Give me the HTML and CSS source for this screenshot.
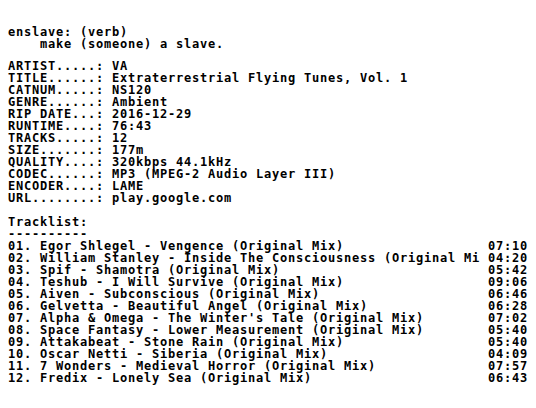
FILE: index.html
```
<!DOCTYPE html>
<html>
<head>
<meta charset="utf-8">
<link rel="stylesheet" href="styles.css">
</head>
<body class="page">
<pre class="nfo definition">enslave: (verb)
    make (someone) a slave.</pre>
<pre class="nfo info">ARTIST.....: VA
TITLE......: Extraterrestrial Flying Tunes, Vol. 1
CATNUM.....: NS120
GENRE......: Ambient
RIP DATE...: 2016-12-29
RUNTIME....: 76:43
TRACKS.....: 12
SIZE.......: 177m
QUALITY....: 320kbps 44.1kHz
CODEC......: MP3 (MPEG-2 Audio Layer III)
ENCODER....: LAME
URL........: play.google.com

Tracklist:
----------
01. Egor Shlegel - Vengence (Original Mix)                  07:10
02. William Stanley - Inside The Consciousness (Original Mi 04:20
03. Spif - Shamotra (Original Mix)                          05:42
04. Teshub - I Will Survive (Original Mix)                  09:06
05. Aiven - Subconscious (Original Mix)                     06:46
06. Gelvetta - Beautiful Angel (Original Mix)               06:28
07. Alpha &amp; Omega - The Winter's Tale (Original Mix)        07:02
08. Space Fantasy - Lower Measurement (Original Mix)        05:40
09. Attakabeat - Stone Rain (Original Mix)                  05:40
10. Oscar Netti - Siberia (Original Mix)                    04:09
11. 7 Wonders - Medieval Horror (Original Mix)              07:57
12. Fredix - Lonely Sea (Original Mix)                      06:43</pre>
</body>
</html>
```

FILE: styles.css
```
html, body {
  margin: 0;
  padding: 0;
  background: #ffffff;
}

.page {
  width: 536px;
  height: 408px;
  overflow: hidden;
}

.nfo {
  margin: 0;
  padding: 0 0 0 8px;
  font-family: "DejaVu Sans Mono", monospace;
  font-weight: bold;
  font-size: 12px;
  line-height: 12px;
  letter-spacing: 0.7754px;
  color: #000000;
  white-space: pre;
}

.definition {
  padding-top: 26px;
  margin-bottom: 10px;
}
```
